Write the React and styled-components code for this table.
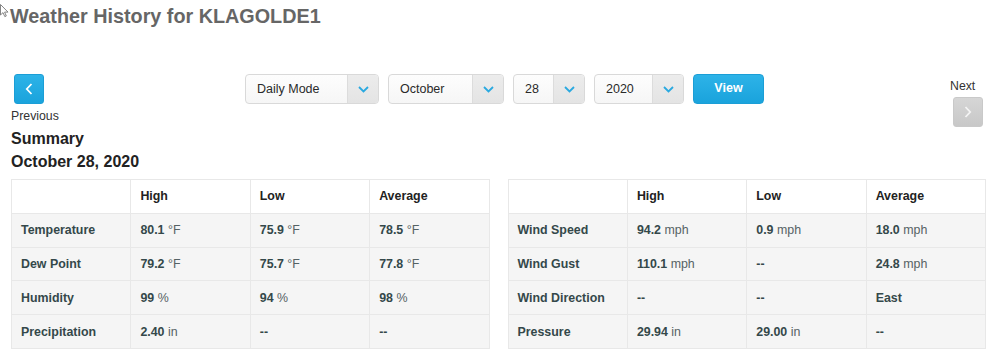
import React from "react";
import styled, { createGlobalStyle } from "styled-components";

const Global = createGlobalStyle`
  html, body { margin: 0; padding: 0; background: #fff; }
  body { font-family: "Liberation Sans", Arial, sans-serif; color: #333; }
  * { box-sizing: border-box; }
`;

const Page = styled.div`
  position: relative;
  width: 1000px;
  padding: 0 14px 0 11px;
`;

const Cursor = styled.svg`
  position: absolute;
  left: 0;
  top: 0;
`;

const Title = styled.h1`
  margin: 4px 0 0 -1px;
  font-size: 19.8px;
  line-height: 24px;
  font-weight: bold;
  color: #666;
`;

const NavRow = styled.div`
  display: flex;
  align-items: flex-start;
  margin-top: 46px;
  height: 53px;
`;

const PrevBlock = styled.div`
  width: 234px;
  display: flex;
  flex-direction: column;
  align-items: flex-start;
`;

const NavLabel = styled.div`
  font-size: 12.3px;
  line-height: 16px;
  color: #333;
  margin-top: ${(p) => p.$mt || 0}px;
`;

const SquareButton = styled.button`
  width: 30px;
  height: 30px;
  padding: 0;
  margin: 0 0 0 3px;
  border-radius: 3px;
  border: 1px solid ${(p) => (p.$disabled ? "#c9c9c9" : "#1b9ed6")};
  background: ${(p) =>
    p.$disabled
      ? "linear-gradient(#d6d6d6, #c8c8c8)"
      : "linear-gradient(#2db3e8, #1aa3dc)"};
  display: flex;
  align-items: center;
  justify-content: center;
  margin-top: ${(p) => p.$mt || 0}px;
`;

const Controls = styled.div`
  display: flex;
  gap: 9px;
`;

const SelectBox = styled.div`
  width: ${(p) => p.$w}px;
  height: 30px;
  display: flex;
  border: 1px solid #d9d9d9;
  border-radius: 4px;
  background: linear-gradient(#fdfdfd, #f6f6f6);
  overflow: hidden;
`;

const SelectText = styled.div`
  flex: 1;
  padding-left: 11px;
  font-size: 12.5px;
  line-height: 29px;
  color: #2a2a2a;
`;

const SelectArrow = styled.div`
  width: 31px;
  border-left: 1px solid #dcdcdc;
  background: linear-gradient(#ececec, #e4e4e4);
  display: flex;
  align-items: center;
  justify-content: center;
`;

const ViewButton = styled.button`
  width: 71px;
  height: 30px;
  margin: 0;
  border: 1px solid #1b9ed6;
  border-radius: 4px;
  background: linear-gradient(#2db3e8, #1aa3dc);
  color: #fff;
  font-family: "Liberation Sans", Arial, sans-serif;
  font-weight: bold;
  font-size: 12.5px;
  padding: 0 0 2px;
`;

const NextBlock = styled.div`
  margin-left: auto;
  margin-right: 3px;
  width: 33px;
  padding-top: 4px;
`;

const Heading = styled.div`
  font-size: 16px;
  line-height: 23px;
  font-weight: bold;
  color: #222;
`;

const Tables = styled.div`
  display: flex;
  gap: 18px;
  margin-top: 6px;
`;

const Table = styled.table`
  flex: 1 1 0;
  min-width: 0;
  border-collapse: collapse;
  table-layout: fixed;
  border: 1px solid #e8e8e8;
`;

const Row = styled.tr`
  height: 33.8px;
  background: ${(p) => (p.$head ? "#fff" : "#f5f5f5")};
`;

const Cell = styled.td`
  border: 1px solid #e8e8e8;
  padding: 0 9px;
  font-size: 12.4px;
  font-weight: ${(p) => (p.$bold ? "bold" : "normal")};
  color: ${(p) => (p.$head ? "#222" : "#34484a")};
  white-space: nowrap;
`;

const Unit = styled.span`
  font-weight: normal;
  color: #556264;
`;

const Chevron = ({ dir = "down", color = "#2aa9e0" }) => {
  if (dir === "down")
    return (
      <svg width="11" height="7" viewBox="0 0 11 7">
        <path d="M1 1 L5.5 5.5 L10 1" fill="none" stroke={color} strokeWidth="1.8" />
      </svg>
    );
  const d = dir === "left" ? "M6.5 1 L1.8 6 L6.5 11" : "M1.5 1 L6.2 6 L1.5 11";
  return (
    <svg width="8" height="12" viewBox="0 0 8 12">
      <path d={d} fill="none" stroke={color} strokeWidth="1.8" />
    </svg>
  );
};

const Select = ({ w, value }) => (
  <SelectBox $w={w}>
    <SelectText>{value}</SelectText>
    <SelectArrow>
      <Chevron />
    </SelectArrow>
  </SelectBox>
);

const Value = ({ v }) => {
  if (!v) return "--";
  const [n, u] = v;
  return (
    <>
      {n}
      {u ? <Unit> {u}</Unit> : null}
    </>
  );
};

const left = [
  ["Temperature", ["80.1", "°F"], ["75.9", "°F"], ["78.5", "°F"]],
  ["Dew Point", ["79.2", "°F"], ["75.7", "°F"], ["77.8", "°F"]],
  ["Humidity", ["99", "%"], ["94", "%"], ["98", "%"]],
  ["Precipitation", ["2.40", "in"], null, null],
];

const right = [
  ["Wind Speed", ["94.2", "mph"], ["0.9", "mph"], ["18.0", "mph"]],
  ["Wind Gust", ["110.1", "mph"], null, ["24.8", "mph"]],
  ["Wind Direction", null, null, ["East"]],
  ["Pressure", ["29.94", "in"], ["29.00", "in"], null],
];

const DataTable = ({ rows }) => (
  <Table>
    <colgroup>
      <col style={{ width: "25%" }} />
      <col style={{ width: "25%" }} />
      <col style={{ width: "25%" }} />
      <col style={{ width: "25%" }} />
    </colgroup>
    <tbody>
      <Row $head>
        <Cell $head $bold></Cell>
        <Cell $head $bold>High</Cell>
        <Cell $head $bold>Low</Cell>
        <Cell $head $bold>Average</Cell>
      </Row>
      {rows.map((r) => (
        <Row key={r[0]}>
          <Cell $bold>{r[0]}</Cell>
          <Cell $bold><Value v={r[1]} /></Cell>
          <Cell $bold><Value v={r[2]} /></Cell>
          <Cell $bold><Value v={r[3]} /></Cell>
        </Row>
      ))}
    </tbody>
  </Table>
);

export default function App() {
  return (
    <Page>
      <Global />
      <Cursor width="9" height="14" viewBox="0 0 9 14">
        <path d="M0.5 0.5 L0.5 11 L3 8.6 L4.8 12.6 L6.3 12 L4.6 8.1 L8 8.1 Z" fill="#fff" stroke="#777" strokeWidth="0.9" />
      </Cursor>
      <Title>Weather History for KLAGOLDE1</Title>
      <NavRow>
        <PrevBlock>
          <SquareButton>
            <Chevron dir="left" color="#fff" />
          </SquareButton>
          <NavLabel $mt={4}>Previous</NavLabel>
        </PrevBlock>
        <Controls>
          <Select w={134} value="Daily Mode" />
          <Select w={116} value="October" />
          <Select w={72} value="28" />
          <Select w={90} value="2020" />
          <ViewButton>View</ViewButton>
        </Controls>
        <NextBlock>
          <NavLabel>Next</NavLabel>
          <SquareButton $disabled $mt={3}>
            <Chevron dir="right" color="#f4f4f4" />
          </SquareButton>
        </NextBlock>
      </NavRow>
      <Heading>Summary</Heading>
      <Heading>October 28, 2020</Heading>
      <Tables>
        <DataTable rows={left} />
        <DataTable rows={right} />
      </Tables>
    </Page>
  );
}
